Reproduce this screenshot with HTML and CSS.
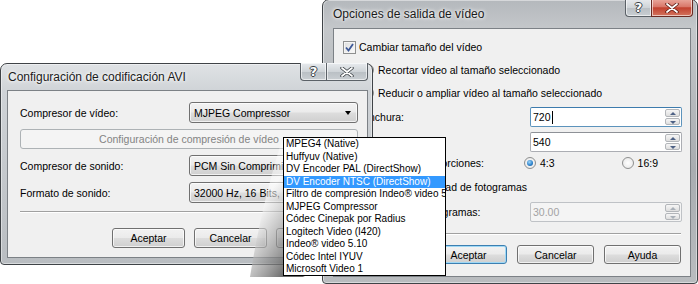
FILE: index.html
```html
<!DOCTYPE html>
<html lang="es">
<head>
<meta charset="utf-8">
<title>Diálogos de vídeo</title>
<link rel="stylesheet" href="styles.css">
</head>
<body>
<div class="desk">

  <div class="win win-b">
    <div class="titlebar"><span class="title">Opciones de salida de vídeo</span></div>
    <div class="capbtns">
      <span class="cap cap-help">?</span>
      <span class="cap cap-close red"><svg width="14" height="10" viewBox="0 0 14 10"><path d="M2 1 L12 9 M12 1 L2 9" stroke="#5a1a12" stroke-width="3.4" stroke-linecap="round"/><path d="M2 1 L12 9 M12 1 L2 9" stroke="#fff" stroke-width="1.8" stroke-linecap="round"/></svg></span>
    </div>
    <div class="client client-b">
      <div class="row r-chk1"><span class="chk on"><svg width="9" height="9" viewBox="0 0 9 9"><path d="M1 4.5 L3.5 7.5 L8 1" fill="none" stroke="#3d5897" stroke-width="1.8"/></svg></span><span>Cambiar tamaño del vídeo</span></div>
      <div class="row r-rad1 ind"><span class="radio"></span><span>Recortar vídeo al tamaño seleccionado</span></div>
      <div class="row r-rad2 ind"><span class="radio"></span><span>Reducir o ampliar vídeo al tamaño seleccionado</span></div>
      <div class="frow r-w"><span class="flabel">Anchura:</span><div class="spin focus"><span class="val">720<i class="caret"></i></span><span class="spbtn"><b class="up"></b><b class="dn"></b></span></div></div>
      <div class="frow r-h"><span class="flabel">Altura:</span><div class="spin"><span class="val">540</span><span class="spbtn"><b class="up"></b><b class="dn"></b></span></div></div>
      <div class="row r-prop"><span class="flabel2">Relación de proporciones:</span><span class="radio on"></span><span class="rl">4:3</span><span class="radio r169"></span><span class="rl">16:9</span></div>
      <div class="row r-chk2"><span class="chk"></span><span>Cambiar la velocidad de fotogramas</span></div>
      <div class="frow r-fps"><span class="flabel">Velocidad de fotogramas:</span><div class="spin dis"><span class="val">30.00</span><span class="spbtn"><b class="up"></b><b class="dn"></b></span></div></div>
      <div class="sep sep-b"></div>
      <div class="btns btns-b"><span class="btn def">Aceptar</span><span class="btn">Cancelar</span><span class="btn">Ayuda</span></div>
    </div>
  </div>

  <div class="win win-a">
    <div class="titlebar"><span class="title">Configuración de codificación AVI</span></div>
    <div class="capbtns">
      <span class="cap cap-help">?</span>
      <span class="cap cap-close"><svg width="14" height="10" viewBox="0 0 14 10"><path d="M2 1 L12 9 M12 1 L2 9" stroke="#3a3f44" stroke-width="3.4" stroke-linecap="round"/><path d="M2 1 L12 9 M12 1 L2 9" stroke="#fff" stroke-width="1.8" stroke-linecap="round"/></svg></span>
    </div>
    <div class="client client-a">
      <div class="crow"><span>Compresor de vídeo:</span><span class="combo">MJPEG Compressor<i class="arr"></i></span></div>
      <div class="wide-btn">Configuración de compresión de vídeo</div>
      <div class="crow"><span>Compresor de sonido:</span><span class="combo">PCM Sin Comprimir<i class="arr"></i></span></div>
      <div class="crow"><span>Formato de sonido:</span><span class="combo">32000 Hz, 16 Bits, Estéreo<i class="arr"></i></span></div>
      <div class="sep sep-a"></div>
      <div class="btns btns-a"><span class="btn">Aceptar</span><span class="btn">Cancelar</span><span class="btn">Ayuda</span></div>
    </div>
  </div>

  <svg class="callout" width="120" height="160" viewBox="0 0 120 160">
    <defs>
      <linearGradient id="cg" x1="0" y1="0" x2="0.6" y2="1">
        <stop offset="0" stop-color="#ffffff" stop-opacity="0"/>
        <stop offset="0.45" stop-color="#ffffff" stop-opacity="0.55"/>
        <stop offset="0.8" stop-color="#8a8a8a" stop-opacity="0.7"/>
        <stop offset="1" stop-color="#5a5a5a" stop-opacity="0.9"/>
      </linearGradient>
    </defs>
    <path d="M63 10 C50 50 38 100 30 150 L85 150 L63 140 Z" fill="url(#cg)"/>
  </svg>

  <ul class="droplist">
    <li>MPEG4 (Native)</li>
    <li>Huffyuv (Native)</li>
    <li>DV Encoder PAL (DirectShow)</li>
    <li class="sel">DV Encoder NTSC (DirectShow)</li>
    <li>Filtro de compresión Indeo® video 5.10</li>
    <li>MJPEG Compressor</li>
    <li>Códec Cinepak por Radius</li>
    <li>Logitech Video (I420)</li>
    <li>Indeo® video 5.10</li>
    <li>Códec Intel IYUV</li>
    <li>Microsoft Video 1</li>
  </ul>
</div>
</body>
</html>
```
FILE: styles.css
```css
* { box-sizing: border-box; }
html, body { margin: 0; padding: 0; }
body {
  width: 698px; height: 284px; overflow: hidden; background: #fff;
  font-family: "Liberation Sans", Arial, sans-serif; font-size: 10.5px; color: #000;
}
.desk { position: relative; width: 698px; height: 284px; }

/* window frames */
.win {
  position: absolute; display: flex; flex-direction: column;
  border: 1px solid #3f4347; border-radius: 7px 7px 4px 4px;
  box-shadow: inset 0 0 0 1px rgba(255,255,255,.45);
}
.win-b {
  left: 322px; top: -1px; width: 376px; height: 285px;
  background: linear-gradient(180deg, #b4b8bc 0%, #c4c7ca 10%, #a9adb1 60%, #b9bcbf 100%);
}
.win-a {
  left: 0; top: 63px; width: 373px; height: 202px; z-index: 2;
  background: linear-gradient(180deg, #dfe2e5 0%, #cfd3d7 14%, #c3c7cb 60%, #b9bdc1 100%);
}
.titlebar { height: 28px; display: flex; align-items: center; flex: none; }
.win-a .titlebar { height: 26px; }
.title { font-size: 12px; color: #1b1b1b; text-shadow: 0 0 5px #fff, 0 0 3px #fff; }
.win-b .title { padding-left: 10px; }
.win-a .title { padding-left: 7px; }

.capbtns { position: absolute; top: -1px; right: 4px; display: flex; }
.win-a .capbtns { right: 4px; }
.cap {
  height: 18px; display: flex; align-items: center; justify-content: center;
  border: 1px solid #5b6167; border-top: none;
  background: linear-gradient(180deg, #e8ebee 0%, #cfd4d8 50%, #b9bfc4 51%, #c9ced2 100%);
  box-shadow: inset 0 0 0 1px rgba(255,255,255,.6);
}
.cap-help {
  width: 26px; border-radius: 0 0 0 4px; border-right: none;
  font: bold 13px "DejaVu Sans", sans-serif; color: #fff;
  text-shadow: -1px 0 #3a3f44, 1px 0 #3a3f44, 0 -1px #3a3f44, 0 1px #3a3f44;
}
.cap-close { width: 42px; border-radius: 0 0 4px 0; }
.cap-close.red {
  border-color: #6b2a22;
  background: linear-gradient(180deg, #eaa99e 0%, #d9786a 45%, #c2412f 52%, #d3745e 100%);
}

.client {
  background: #f0f0f0; border: 1px solid #7c8186;
  display: flex; flex-direction: column; flex: 1;
}
.client-b { margin: 0 6px 6px 10px; padding: 11px 9px 0 9px; }
.client-a { margin: 0 4px 6px 6px; padding: 11px 9px 0 12px; }

/* right dialog rows */
.row { display: flex; align-items: center; height: 14px; white-space: nowrap; flex: none; }
.ind { padding-left: 19px; }
.r-chk1 { margin-top: 0; }
.r-rad1 { margin-top: 9px; }
.r-rad2 { margin-top: 9px; }
.frow { display: flex; align-items: center; height: 20px; flex: none; }
.r-w { margin-top: 7px; }
.r-h { margin-top: 5px; }
.r-prop { margin-top: 4px; padding-left: 19px; }
.r-chk2 { margin-top: 10px; }
.r-fps { margin-top: 8px; }
.flabel { padding-left: 19px; width: 187px; flex: none; white-space: nowrap; }
.flabel2 { width: 162px; flex: none; }

.chk {
  width: 13px; height: 13px; border: 1px solid #8e8f8f; margin-right: 3px; flex: none;
  background: linear-gradient(135deg, #dcdcdc, #fbfbfb);
  box-shadow: inset 0 0 0 1px #f4f4f4;
  display: flex; align-items: center; justify-content: center;
}
.radio {
  width: 12px; height: 12px; border-radius: 50%; border: 1px solid #8e8f8f; flex: none;
  background: radial-gradient(circle at 50% 50%, #fff 0, #e4e4e4 100%);
  margin-right: 4px; position: relative;
}
.radio.on::after {
  content: ""; position: absolute; left: 2px; top: 2px; width: 6px; height: 6px; border-radius: 50%;
  background: radial-gradient(circle at 40% 35%, #9fd7fb 0, #2a7fc9 60%, #1a4f86 100%);
}
.rl { margin-right: 0; }
.r169 { margin-left: 67px; }

.spin {
  width: 152px; height: 20px; border: 1px solid #abadb3; border-top-color: #8e9197; background: #fff;
  display: flex; align-items: stretch; border-radius: 2px; flex: none;
}
.spin.focus { border-color: #5c93bc; border-top-color: #3d7bad; }
.spin.dis { background: #f4f4f4; border-color: #bfc2c6; color: #a3a3a3; }
.val { flex: 1; padding-left: 2px; display: flex; align-items: center; }
.caret { display: inline-block; width: 1px; height: 13px; background: #000; margin-left: 1px; }
.spbtn { width: 17px; display: flex; flex-direction: column; padding: 1px; gap: 1px; }
.spbtn b {
  flex: 1; border: 1px solid #b3b6ba; border-radius: 2px; position: relative;
  background: linear-gradient(180deg, #f6f6f6, #dedede);
}
.spbtn b::after {
  content: ""; position: absolute; left: 4px; top: 2px;
  border-left: 3px solid transparent; border-right: 3px solid transparent;
}
.spbtn .up::after { border-bottom: 3px solid #4d6185; }
.spbtn .dn::after { border-top: 3px solid #4d6185; }
.dis .spbtn b::after { border-bottom-color: #a9b0b8; border-top-color: #a9b0b8; }

.sep { height: 2px; border-top: 1px solid #a0a0a0; border-bottom: 1px solid #fff; flex: none; }
.sep-b { margin: 11px 0 0 0; }
.btns { display: flex; justify-content: flex-end; flex: none; }
.btns-b { margin-top: 10px; gap: 10px; }
.btn {
  width: 77px; height: 19px; border: 1px solid #707070; border-radius: 3px;
  background: linear-gradient(180deg, #f2f2f2 0%, #ebebeb 48%, #dddddd 52%, #cfcfcf 100%);
  box-shadow: inset 0 0 0 1px rgba(255,255,255,.7);
  display: flex; align-items: center; justify-content: center;
}
.btn.def { border-color: #3c7fb1; box-shadow: inset 0 0 0 1px #9fd8f5; }

/* left dialog */
.crow { display: flex; align-items: center; justify-content: space-between; height: 21px; flex: none; }
.crow + .wide-btn { margin-top: 6px; }
.wide-btn + .crow { margin-top: 6px; }
.crow + .crow { margin-top: 6px; }
.combo {
  width: 169px; height: 21px; border: 1px solid #707070; border-radius: 3px; position: relative;
  background: linear-gradient(180deg, #f2f2f2 0%, #ebebeb 48%, #dddddd 52%, #cfcfcf 100%);
  box-shadow: inset 0 0 0 1px rgba(255,255,255,.7);
  padding-left: 4px; display: flex; align-items: center; white-space: nowrap; overflow: hidden;
}
.arr {
  position: absolute; right: 6px; top: 8px;
  border-left: 3.5px solid transparent; border-right: 3.5px solid transparent; border-top: 4px solid #000;
}
.wide-btn {
  height: 20px; border: 1px solid #adb2b5; border-radius: 3px; background: #f4f4f4; color: #838383;
  display: flex; align-items: center; justify-content: center; flex: none;
}
.sep-a { margin-top: 8px; }
.btns-a { margin-top: 15px; gap: 9px; padding-right: 9px; }
.btns-a .btn { height: 20px; width: 73px; }

/* callout shading + dropdown */
.callout { position: absolute; left: 220px; top: 127px; z-index: 4; pointer-events: none; }
.droplist {
  position: absolute; left: 283px; top: 137px; width: 163px; height: 139px; z-index: 5;
  margin: 0; padding: 0; list-style: none; border: 1px solid #000; background: #fff;
  font-size: 10px; overflow: hidden;
}
.droplist li { height: 12.5px; line-height: 12.5px; padding-left: 2px; white-space: nowrap; }
.droplist li.sel { background: #3399ff; color: #fff; }
```
